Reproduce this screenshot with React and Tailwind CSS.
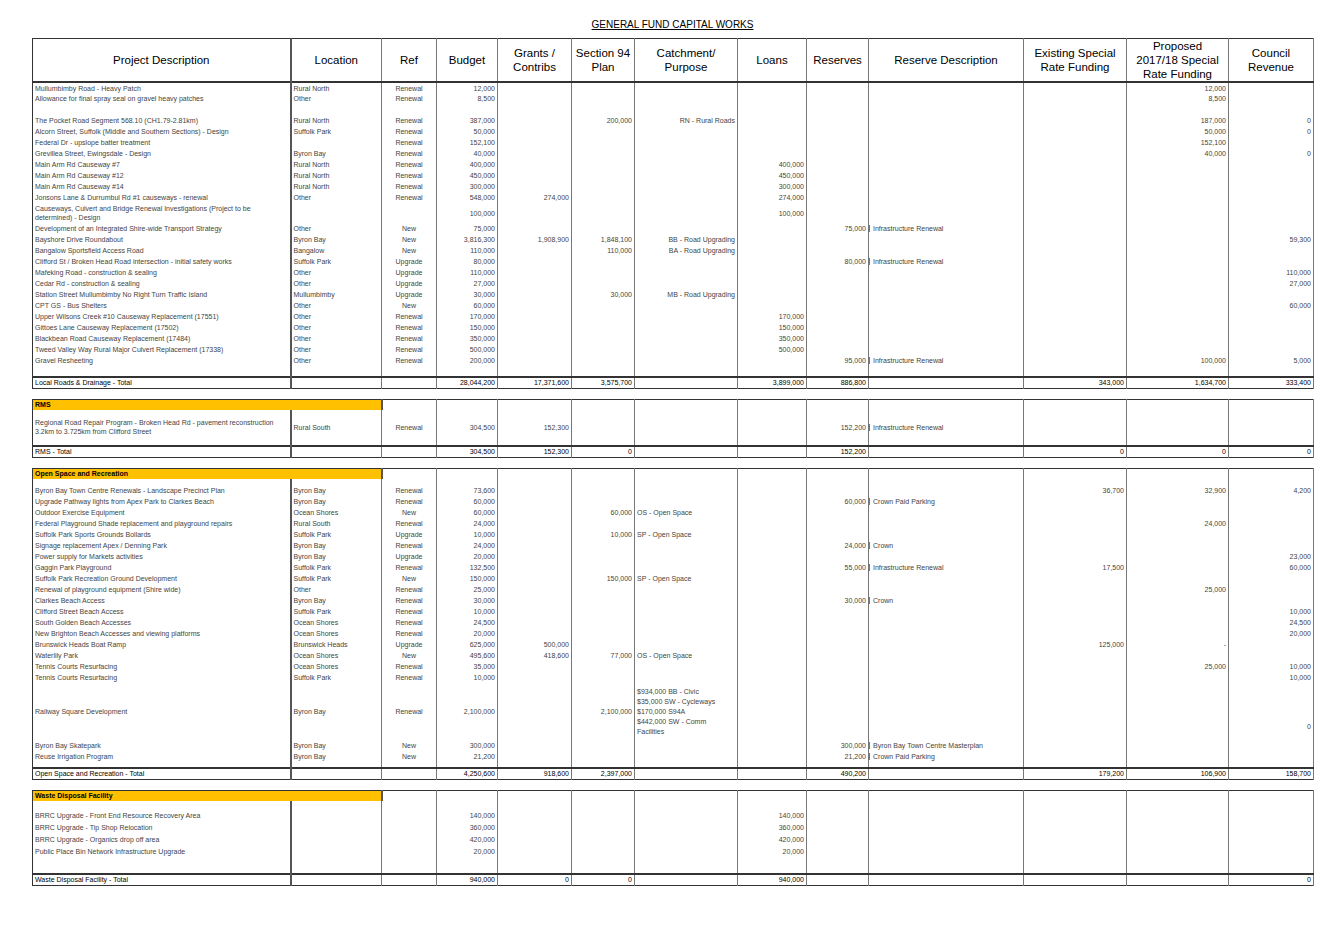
import React from "react";

const W = [258, 91, 55, 61, 74, 63, 103, 69, 62, 155, 103, 102, 85];
const ALIGN = ["left", "left", "center", "right", "right", "right", "right", "right", "right", "left", "right", "right", "right"];

const roads = [
  ["Mullumbimby Road - Heavy Patch", "Rural North", "Renewal", "12,000", "", "", "", "", "", "", "", "12,000", ""],
  ["Allowance for final spray seal on gravel heavy patches", "Other", "Renewal", "8,500", "", "", "", "", "", "", "", "8,500", ""],
  [],
  ["The Pocket Road Segment 568.10 (CH1.79-2.81km)", "Rural North", "Renewal", "387,000", "", "200,000", "RN - Rural Roads", "", "", "", "", "187,000", "0"],
  ["Alcorn Street, Suffolk (Middle and Southern Sections) - Design", "Suffolk Park", "Renewal", "50,000", "", "", "", "", "", "", "", "50,000", "0"],
  ["Federal Dr - upslope batter treatment", "", "Renewal", "152,100", "", "", "", "", "", "", "", "152,100", ""],
  ["Grevillea Street, Ewingsdale - Design", "Byron Bay", "Renewal", "40,000", "", "", "", "", "", "", "", "40,000", "0"],
  ["Main Arm Rd Causeway #7", "Rural North", "Renewal", "400,000", "", "", "", "400,000", "", "", "", "", ""],
  ["Main Arm Rd Causeway #12", "Rural North", "Renewal", "450,000", "", "", "", "450,000", "", "", "", "", ""],
  ["Main Arm Rd Causeway #14", "Rural North", "Renewal", "300,000", "", "", "", "300,000", "", "", "", "", ""],
  ["Jonsons Lane & Durrumbul Rd #1 causeways - renewal", "Other", "Renewal", "548,000", "274,000", "", "", "274,000", "", "", "", "", ""],
  ["Causeways, Culvert and Bridge Renewal Investigations (Project to be determined) - Design", "", "", "100,000", "", "", "", "100,000", "", "", "", "", "", 20],
  ["Development of an Integrated Shire-wide Transport Strategy", "Other", "New", "75,000", "", "", "", "", "75,000", "Infrastructure Renewal", "", "", ""],
  ["Bayshore Drive Roundabout", "Byron Bay", "New", "3,816,300", "1,908,900", "1,848,100", "BB - Road Upgrading", "", "", "", "", "", "59,300"],
  ["Bangalow Sportsfield Access Road", "Bangalow", "New", "110,000", "", "110,000", "BA - Road Upgrading", "", "", "", "", "", ""],
  ["Clifford St / Broken Head Road intersection - initial safety works", "Suffolk Park", "Upgrade", "80,000", "", "", "", "", "80,000", "Infrastructure Renewal", "", "", ""],
  ["Mafeking Road - construction & sealing", "Other", "Upgrade", "110,000", "", "", "", "", "", "", "", "", "110,000"],
  ["Cedar Rd - construction & sealing", "Other", "Upgrade", "27,000", "", "", "", "", "", "", "", "", "27,000"],
  ["Station Street Mullumbimby No Right Turn Traffic Island", "Mullumbimby", "Upgrade", "30,000", "", "30,000", "MB - Road Upgrading", "", "", "", "", "", ""],
  ["CPT GS - Bus Shelters", "Other", "New", "60,000", "", "", "", "", "", "", "", "", "60,000"],
  ["Upper Wilsons Creek #10 Causeway Replacement (17551)", "Other", "Renewal", "170,000", "", "", "", "170,000", "", "", "", "", ""],
  ["Gittoes Lane Causeway Replacement (17502)", "Other", "Renewal", "150,000", "", "", "", "150,000", "", "", "", "", ""],
  ["Blackbean Road Causeway Replacement (17484)", "Other", "Renewal", "350,000", "", "", "", "350,000", "", "", "", "", ""],
  ["Tweed Valley Way Rural Major Culvert Replacement (17338)", "Other", "Renewal", "500,000", "", "", "", "500,000", "", "", "", "", ""],
  ["Gravel Resheeting", "Other", "Renewal", "200,000", "", "", "", "", "95,000", "Infrastructure Renewal", "", "100,000", "5,000"],
  [],
];

const open = [
  ["", "", "", "", "", "", "", "", "", "", "", "", "", 6],
  ["Byron Bay Town Centre Renewals - Landscape Precinct Plan", "Byron Bay", "Renewal", "73,600", "", "", "", "", "", "", "36,700", "32,900", "4,200"],
  ["Upgrade Pathway lights from Apex Park to Clarkes Beach", "Byron Bay", "Renewal", "60,000", "", "", "", "", "60,000", "Crown Paid Parking", "", "", ""],
  ["Outdoor Exercise Equipment", "Ocean Shores", "New", "60,000", "", "60,000", "OS - Open Space", "", "", "", "", "", ""],
  ["Federal Playground Shade replacement and playground repairs", "Rural South", "Renewal", "24,000", "", "", "", "", "", "", "", "24,000", ""],
  ["Suffolk Park Sports Grounds Bollards", "Suffolk Park", "Upgrade", "10,000", "", "10,000", "SP - Open Space", "", "", "", "", "", ""],
  ["Signage replacement Apex / Denning Park", "Byron Bay", "Renewal", "24,000", "", "", "", "", "24,000", "Crown", "", "", ""],
  ["Power supply for Markets activities", "Byron Bay", "Upgrade", "20,000", "", "", "", "", "", "", "", "", "23,000"],
  ["Gaggin Park Playground", "Suffolk Park", "Renewal", "132,500", "", "", "", "", "55,000", "Infrastructure Renewal", "17,500", "", "60,000"],
  ["Suffolk Park Recreation Ground Development", "Suffolk Park", "New", "150,000", "", "150,000", "SP - Open Space", "", "", "", "", "", ""],
  ["Renewal of playground equipment (Shire wide)", "Other", "Renewal", "25,000", "", "", "", "", "", "", "", "25,000", ""],
  ["Clarkes Beach Access", "Byron Bay", "Renewal", "30,000", "", "", "", "", "30,000", "Crown", "", "", ""],
  ["Clifford Street Beach Access", "Suffolk Park", "Renewal", "10,000", "", "", "", "", "", "", "", "", "10,000"],
  ["South Golden Beach Accesses", "Ocean Shores", "Renewal", "24,500", "", "", "", "", "", "", "", "", "24,500"],
  ["New Brighton Beach Accesses and viewing platforms", "Ocean Shores", "Renewal", "20,000", "", "", "", "", "", "", "", "", "20,000"],
  ["Brunswick Heads Boat Ramp", "Brunswick Heads", "Upgrade", "625,000", "500,000", "", "", "", "", "", "125,000", "-", ""],
  ["Waterlily Park", "Ocean Shores", "New", "495,600", "418,600", "77,000", "OS - Open Space", "", "", "", "", "", ""],
  ["Tennis Courts Resurfacing", "Ocean Shores", "Renewal", "35,000", "", "", "", "", "", "", "", "25,000", "10,000"],
  ["Tennis Courts Resurfacing", "Suffolk Park", "Renewal", "10,000", "", "", "", "", "", "", "", "", "10,000"],
  ["Railway Square Development", "Byron Bay", "Renewal", "2,100,000", "", "2,100,000", "RAIL", "", "", "", "", "", "0", 57],
  ["Byron Bay Skatepark", "Byron Bay", "New", "300,000", "", "", "", "", "300,000", "Byron Bay Town Centre Masterplan", "", "", ""],
  ["Reuse Irrigation Program", "Byron Bay", "New", "21,200", "", "", "", "", "21,200", "Crown Paid Parking", "", "", ""],
  ["", "", "", "", "", "", "", "", "", "", "", "", "", 6],
];

const waste = [
  ["", "", "", "", "", "", "", "", "", "", "", "", "", 8],
  ["BRRC Upgrade - Front End Resource Recovery Area", "", "", "140,000", "", "", "", "140,000", "", "", "", "", "", 12],
  ["BRRC Upgrade - Tip Shop Relocation", "", "", "360,000", "", "", "", "360,000", "", "", "", "", "", 12],
  ["BRRC Upgrade - Organics drop off area", "", "", "420,000", "", "", "", "420,000", "", "", "", "", "", 12],
  ["Public Place Bin Network Infrastructure Upgrade", "", "", "20,000", "", "", "", "20,000", "", "", "", "", "", 12],
  ["", "", "", "", "", "", "", "", "", "", "", "", "", 17],
];

const rms = [
  ["", "", "", "", "", "", "", "", "", "", "", "", "", 6],
  ["Regional Road Repair Program - Broken Head Rd - pavement reconstruction 3.2km to 3.725km from Clifford Street", "Rural South", "Renewal", "304,500", "152,300", "", "", "", "152,200", "Infrastructure Renewal", "", "", "", 22],
  ["", "", "", "", "", "", "", "", "", "", "", "", "", 8],
];

function Cell({ i, children, catchLeft, className = "" }) {
  let align = ALIGN[i];
  if (i === 6 && catchLeft) align = "left";
  const a = align === "left" ? "text-left" : align === "center" ? "text-center" : "text-right";
  const b = i === 0 ? "border-r-2 border-r-[#555]" : "border-r border-r-[#777]";
  return <td className={`${a} ${b} px-[2px] align-middle leading-[9px] p-0 ${className}`}>{children}</td>;
}

function Row({ r, catchLeft }) {
  const h = r[13] || 11;
  if (r[6] === "RAIL") {
    return (
      <tr style={{ height: h }}>
        {W.map((_, i) => (
          <Cell key={i} i={i} catchLeft>
            {i === 6 ? (
              <div className="text-[7px] leading-[10px] text-left">
                <div>$934,000 BB - Civic</div>
                <div>$35,000 SW - Cycleways</div>
                <div>$170,000 S94A</div>
                <div>$442,000 SW - Comm</div>
                <div>Facilities</div>
              </div>
            ) : i === 12 ? <div className="pt-[30px]">{r[i]}</div> : r[i]}
          </Cell>
        ))}
      </tr>
    );
  }
  return (
    <tr style={{ height: h }}>
      {W.map((_, i) => (
        <Cell key={i} i={i} catchLeft={catchLeft}>
          {i === 9 && r[i] ? <span className="border-l border-[#777] pl-[3px] -ml-[2px]">{r[i]}</span> : r[i] || ""}
        </Cell>
      ))}
    </tr>
  );
}

function Section({ title, rows, total, catchLeft }) {
  return (
    <table className="table-fixed border-collapse border border-[#333] text-[7px] text-[#444] w-[1281px]">
      <colgroup>{W.map((w, i) => <col key={i} style={{ width: w }} />)}</colgroup>
      <tbody>
        <tr className="h-[11px]">
          <td colSpan={2} className="bg-[#ffc000] font-bold text-black px-[2px] border-r-2 border-r-[#555] leading-[9px]">{title}</td>
          {W.slice(2).map((_, j) => <Cell key={j} i={j + 2} />)}
        </tr>
        {rows.map((r, k) => <Row key={k} r={r} catchLeft={catchLeft} />)}
        <tr className="h-[11px] border-t-2 border-t-[#333] text-black">
          {W.map((_, i) => <Cell key={i} i={i}>{total[i]}</Cell>)}
        </tr>
      </tbody>
    </table>
  );
}

const heads = ["Project Description", "Location", "Ref", "Budget", "Grants / Contribs", "Section 94 Plan", "Catchment/ Purpose", "Loans", "Reserves", "Reserve Description", "Existing Special Rate Funding", "Proposed 2017/18 Special Rate Funding", "Council Revenue"];

export default function App() {
  return (
    <div className="w-[1340px] h-[947px] bg-white pt-[19px] pl-[32px]" style={{ fontFamily: '"Liberation Sans", Arial, sans-serif' }}>
      <div className="w-[1281px] text-center text-[10px] leading-[12px] underline text-black mb-[7px]">GENERAL FUND CAPITAL WORKS</div>
      <table className="table-fixed border-collapse border border-[#333] text-[7px] text-[#444] w-[1281px]">
        <colgroup>{W.map((w, i) => <col key={i} style={{ width: w }} />)}</colgroup>
        <tbody>
          <tr className="h-[42px] border-b-2 border-b-[#333]">
            {heads.map((h, i) => (
              <td key={i} className={`text-center text-[11.5px] leading-[14px] text-black px-[2px] ${i === 11 ? "px-[8px]" : ""} ${i === 0 ? "border-r-2 border-r-[#555]" : "border-r border-r-[#777]"}`}>{h}</td>
            ))}
          </tr>
          {roads.map((r, k) => <Row key={k} r={r} />)}
          <tr className="h-[11px] border-t-2 border-t-[#333] text-black">
            {["Local Roads & Drainage - Total", "", "", "28,044,200", "17,371,600", "3,575,700", "", "3,899,000", "886,800", "", "343,000", "1,634,700", "333,400"].map((t, i) => <Cell key={i} i={i}>{t}</Cell>)}
          </tr>
        </tbody>
      </table>
      <div className="h-[10px]" />
      <Section title="RMS" rows={rms} total={["RMS - Total", "", "", "304,500", "152,300", "0", "", "", "152,200", "", "0", "0", "0"]} />
      <div className="h-[10px]" />
      <Section title="Open Space and Recreation" rows={open} catchLeft total={["Open Space and Recreation - Total", "", "", "4,250,600", "918,600", "2,397,000", "", "", "490,200", "", "179,200", "106,900", "158,700"]} />
      <div className="h-[10px]" />
      <Section title="Waste Disposal Facility" rows={waste} total={["Waste Disposal Facility - Total", "", "", "940,000", "0", "0", "", "940,000", "", "", "", "", "0"]} />
    </div>
  );
}
